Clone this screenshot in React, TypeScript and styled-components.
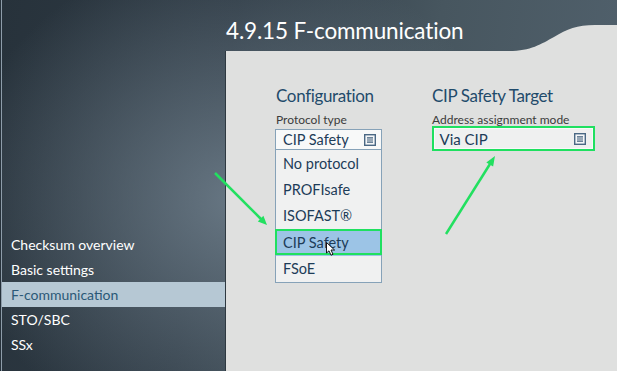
import React from "react";
import styled, { createGlobalStyle } from "styled-components";

const GlobalStyle = createGlobalStyle`
  html, body {
    margin: 0;
    padding: 0;
    width: 617px;
    height: 371px;
    overflow: hidden;
  }
  body {
    font-family: Lato, "Noto Sans", "Liberation Sans", sans-serif;
  }
`;

const Screen = styled.div`
  position: relative;
  width: 617px;
  height: 371px;
  display: grid;
  grid-template-columns: 226px 1fr;
  overflow: hidden;
  background:
    radial-gradient(ellipse 280px 250px at 235px 200px, rgba(112, 128, 141, 0.85), rgba(112, 128, 141, 0) 100%),
    linear-gradient(100deg, #27323b 0%, #2f3b45 35%, #47565f 65%, #52626e 100%);
  box-shadow: inset 1px 0 #26313a, inset 2px 0 #8e9daa;
`;

const Sidebar = styled.nav`
  display: flex;
  flex-direction: column;
  justify-content: flex-end;
  padding-bottom: 14px;
`;

const NavItem = styled.div<{ $active?: boolean }>`
  height: 25px;
  margin-left: 2px;
  margin-right: 1px;
  padding-left: 9px;
  display: flex;
  align-items: center;
  font-size: 14px;
  color: ${(p) => (p.$active ? "#2b5877" : "#ffffff")};
  background: ${(p) => (p.$active ? "#b6c8d4" : "transparent")};
`;

const Main = styled.main`
  display: flex;
  flex-direction: column;
  min-width: 0;
`;

const Header = styled.header`
  height: 51px;
  display: flex;
  align-items: flex-end;
`;

const Title = styled.h1`
  margin: 0 0 6px 0;
  font-size: 22.5px;
  font-weight: 400;
  line-height: 28px;
  letter-spacing: -0.15px;
  color: #ffffff;
  white-space: nowrap;
`;

const Panel = styled.section`
  position: relative;
  flex: 1;
  background: #dfe0df;
  box-shadow: -1px 0 #2e3941;
  padding: 34px 0 0 50px;
  display: flex;
`;

const Bump = styled.svg`
  position: absolute;
  right: 0;
  top: -26px;
  width: 120px;
  height: 26px;
`;

const Column = styled.div<{ $width?: number }>`
  display: flex;
  flex-direction: column;
  width: ${(p) => (p.$width ? `${p.$width}px` : "auto")};
`;

const Heading = styled.h2`
  margin: 0;
  font-size: 17px;
  font-weight: 400;
  line-height: 22px;
  letter-spacing: -0.35px;
  color: #1f4b6b;
  white-space: nowrap;
`;

const Label = styled.div`
  margin-top: 5px;
  font-size: 12px;
  line-height: 15px;
  color: #3b3b3b;
  white-space: nowrap;
`;

const Dropdown = styled.div`
  margin-top: 2px;
  margin-left: -1px;
  width: 107px;
  border: 1px solid #86a2b8;
  box-sizing: border-box;
`;

const DropdownHeader = styled.div`
  height: 19px;
  display: flex;
  align-items: center;
  justify-content: space-between;
  padding: 0 5px 0 7px;
  background: #f8f9f9;
  border-bottom: 1px solid #86a2b8;
  font-size: 14.5px;
  color: #1d3c58;
`;

const List = styled.div`
  background: #f0f1f1;
`;

const Item = styled.div<{ $selected?: boolean }>`
  position: relative;
  height: 26.4px;
  padding-left: 7px;
  display: flex;
  align-items: center;
  font-size: 14.5px;
  color: #1d3c58;
  background: ${(p) => (p.$selected ? "#9cc4e6" : "transparent")};

  ${(p) =>
    p.$selected &&
    `
    &::after {
      content: "";
      position: absolute;
      top: -0.5px;
      bottom: 0.5px;
      left: -1px;
      right: -1px;
      border: 2.5px solid #1fe060;
    }
  `}
`;

const Cursor = styled.svg`
  position: absolute;
  left: 50px;
  top: 13px;
  width: 10px;
  height: 14px;
  z-index: 2;
`;

const Field = styled.div`
  margin-top: 1px;
  margin-left: 1.5px;
  width: 159px;
  height: 21px;
  box-sizing: border-box;
  display: flex;
  align-items: center;
  justify-content: space-between;
  padding: 0 6px 0 5px;
  background: #eff0f0;
  border: 1px solid #f8f9f9;
  outline: 2.5px solid #1fe060;
  font-size: 15px;
  color: #1d3c58;
`;

const Annotations = styled.svg`
  position: absolute;
  left: 0;
  top: 0;
  width: 617px;
  height: 371px;
  pointer-events: none;
  z-index: 5;
`;

const ListIcon = () => (
  <svg width="12" height="12" viewBox="0 0 12 12">
    <rect x="0.7" y="0.7" width="10.6" height="10.6" fill="#f5f7f8" stroke="#4a6884" strokeWidth="1.4" />
    <path d="M3 3.9h6M3 6h6M3 8.1h6" stroke="#3f5d79" strokeWidth="1.1" />
  </svg>
);

const protocols = ["No protocol", "PROFIsafe", "ISOFAST®", "CIP Safety", "FSoE"];
const navItems = ["Checksum overview", "Basic settings", "F-communication", "STO/SBC", "SSx"];

export default function App() {
  return (
    <>
      <GlobalStyle />
      <Screen>
        <Sidebar>
          {navItems.map((n) => (
            <NavItem key={n} $active={n === "F-communication"}>
              {n}
            </NavItem>
          ))}
        </Sidebar>
        <Main>
          <Header>
            <Title>4.9.15 F-communication</Title>
          </Header>
          <Panel>
            <Bump viewBox="0 0 120 26" preserveAspectRatio="none">
              <path d="M0 26 L12 26 C34 26 44 19 57 12 C70 4 80 0 98 0 L120 0 L120 26 Z" fill="#dfe0df" />
            </Bump>
            <Column $width={156}>
              <Heading>Configuration</Heading>
              <Label>Protocol type</Label>
              <Dropdown>
                <DropdownHeader>
                  <span>CIP Safety</span>
                  <ListIcon />
                </DropdownHeader>
                <List>
                  {protocols.map((p) => (
                    <Item key={p} $selected={p === "CIP Safety"}>
                      {p}
                      {p === "CIP Safety" && (
                        <Cursor viewBox="0 0 10 14">
                          <path d="M0.5 0.5 L0.5 11 L3 8.8 L5 13.2 L7 12.3 L5 8 L8.6 8 Z" fill="#ffffff" stroke="#000000" strokeWidth="0.9" strokeLinejoin="round" />
                        </Cursor>
                      )}
                    </Item>
                  ))}
                </List>
              </Dropdown>
            </Column>
            <Column>
              <Heading>CIP Safety Target</Heading>
              <Label>Address assignment mode</Label>
              <Field>
                <span>Via CIP</span>
                <ListIcon />
              </Field>
            </Column>
          </Panel>
        </Main>
        <Annotations viewBox="0 0 617 371">
          <line x1="215" y1="173" x2="261" y2="219" stroke="#22e060" strokeWidth="2.5" />
          <polygon points="267,225 257.8,221.4 263.4,215.8" fill="#22e060" />
          <line x1="446" y1="234" x2="490" y2="164" stroke="#22e060" strokeWidth="2.5" />
          <polygon points="495,156 493.1,166.6 486.3,162.4" fill="#22e060" />
        </Annotations>
      </Screen>
    </>
  );
}
